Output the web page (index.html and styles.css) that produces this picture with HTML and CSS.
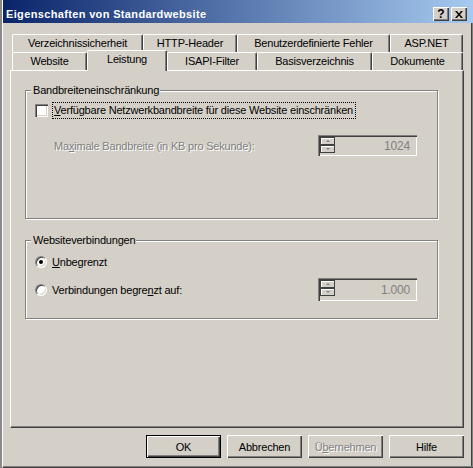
FILE: index.html
```html
<!DOCTYPE html>
<html>
<head>
    <title>Eigenschaften von Standardwebsite</title>
    <link rel="stylesheet" href="styles.css">
</head>
<body>
    <div class="window">
        <div class="titlebar">
            <span class="title">Eigenschaften von Standardwebsite</span>
            <div class="caption-btns">
                <span class="cbtn help">?</span>
                <span class="cbtn close">
                    <svg width="8" height="7" viewBox="0 0 8 7"><path d="M0 0h2l2 2.5L6 0h2L5 3.5 8 7H6L4 4.5 2 7H0l3-3.5z" fill="#000"/></svg>
                </span>
            </div>
        </div>
        <div class="dialog">
            <div class="tabs">
                <div class="tabrow back">
                    <div class="tab">Verzeichnissicherheit</div>
                    <div class="tab">HTTP-Header</div>
                    <div class="tab">Benutzerdefinierte Fehler</div>
                    <div class="tab">ASP.NET</div>
                </div>
                <div class="tabrow front">
                    <div class="tab">Website</div>
                    <div class="tab active">Leistung</div>
                    <div class="tab">ISAPI-Filter</div>
                    <div class="tab">Basisverzeichnis</div>
                    <div class="tab">Dokumente</div>
                </div>
            </div>
            <div class="panel">
                <fieldset class="group bandwidth">
                    <legend>Bandbreiteneinschränkung</legend>
                    <div class="row check-row">
                        <span class="checkbox"></span>
                        <span class="label focus"><u>V</u>erfügbare Netzwerkbandbreite für diese Website einschränken</span>
                    </div>
                    <div class="row field-row">
                        <span class="label disabled">Ma<u>x</u>imale Bandbreite (in KB pro Sekunde):</span>
                        <div class="spin">
                            <div class="spin-btns">
                                <span class="sbtn"><i class="arrow up"></i></span>
                                <span class="sbtn"><i class="arrow down"></i></span>
                            </div>
                            <span class="spin-val">1024</span>
                        </div>
                    </div>
                </fieldset>
                <fieldset class="group connections">
                    <legend>Websiteverbindungen</legend>
                    <div class="row radio-row first">
                        <span class="radio checked"></span>
                        <span class="label"><u>U</u>nbegrenzt</span>
                    </div>
                    <div class="row radio-row second">
                        <span class="radio"></span>
                        <span class="label">Verbindungen begre<u>n</u>zt auf:</span>
                        <div class="spin tall">
                            <div class="spin-btns">
                                <span class="sbtn"><i class="arrow up"></i></span>
                                <span class="sbtn"><i class="arrow down"></i></span>
                            </div>
                            <span class="spin-val">1.000</span>
                        </div>
                    </div>
                </fieldset>
            </div>
            <div class="buttons">
                <button class="btn default">OK</button>
                <button class="btn">Abbrechen</button>
                <button class="btn off">Ü<u>b</u>ernehmen</button>
                <button class="btn">Hilfe</button>
            </div>
        </div>
    </div>
</body>
</html>
```

FILE: styles.css
```css
body {
    margin: 0;
    background: #8a8a8a;
    font-family: "Liberation Sans", Arial, sans-serif;
    font-size: 11px;
    color: #000;
}
.window {
    margin-left: 2px;
    height: 467px;
    background: #d4d0c8;
    border-left: 1px solid #fff;
    border-bottom: 1px solid #404040;
    box-shadow: inset 0 -1px 0 #808080, inset -1px 0 0 #808080, inset -2px 0 0 #404040;
    overflow: hidden;
}
.titlebar {
    height: 23px;
    display: flex;
    justify-content: space-between;
    background: linear-gradient(to right, #0a246a, #a6caf0);
    padding-left: 3px;
    padding-right: 6px;
}
.title {
    color: #fff;
    font-weight: bold;
    letter-spacing: 0.35px;
    padding-top: 8px;
    line-height: 13px;
}
.caption-btns {
    display: flex;
    gap: 2px;
    margin-top: 7px;
}
.cbtn {
    width: 16px;
    height: 14px;
    box-sizing: border-box;
    background: #d4d0c8;
    box-shadow: inset 1px 1px 0 #fff, inset -1px -1px 0 #404040, inset -2px -2px 0 #808080;
    display: flex;
    align-items: center;
    justify-content: center;
    font-weight: bold;
    font-size: 12px;
    line-height: 14px;
}
.dialog {
    padding: 11px 0 0 7px;
}
.tabs {
    padding-left: 2px;
}
.tabrow {
    display: flex;
    height: 18px;
}
.tab {
    height: 18px;
    box-sizing: border-box;
    border-left: 1px solid #fff;
    border-top: 1px solid #fff;
    border-right: 1px solid #404040;
    border-radius: 2px 2px 0 0;
    box-shadow: inset -1px 0 0 #808080;
    text-align: center;
    line-height: 16px;
    letter-spacing: -0.2px;
    background: #d4d0c8;
}
.back .tab:nth-child(1) { width: 131px; }
.back .tab:nth-child(2) { width: 94px; }
.back .tab:nth-child(3) { width: 153px; }
.back .tab:nth-child(4) { width: 73px; }
.front .tab:nth-child(1) { width: 75px; }
.front .tab:nth-child(2) { width: 80px; }
.front .tab:nth-child(3) { width: 90px; }
.front .tab:nth-child(4) { width: 115px; }
.front .tab:nth-child(5) { width: 91px; }
.tab.active {
    height: 21px;
    margin-top: -2px;
    line-height: 16px;
    position: relative;
    z-index: 1;
}
.panel {
    width: 454px;
    height: 358px;
    box-sizing: border-box;
    border-left: 1px solid #fff;
    border-top: 1px solid #fff;
    border-right: 1px solid #404040;
    border-bottom: 1px solid #404040;
    box-shadow: inset -1px -1px 0 #808080;
    padding: 0 0 0 14px;
}
.group {
    width: 413px;
    box-sizing: border-box;
    margin: 0;
    padding: 0;
    border: 1px solid #808080;
    box-shadow: inset 1px 1px 0 #fff, 1px 1px 0 #fff;
}
.group legend {
    margin-left: 5px;
    padding: 0 1px 0 2px;
    background: #d4d0c8;
    line-height: 13px;
    letter-spacing: -0.2px;
}
.bandwidth {
    margin-top: 13px;
    height: 135px;
}
.connections {
    margin-top: 15px;
    height: 85px;
}
.row {
    display: flex;
    align-items: center;
    letter-spacing: -0.2px;
}
.check-row {
    margin: 5px 0 0 9px;
}
.checkbox {
    width: 13px;
    height: 13px;
    box-sizing: border-box;
    background: #fff;
    box-shadow: inset 1px 1px 0 #808080, inset 2px 2px 0 #404040, inset -1px -1px 0 #fff, inset -2px -2px 0 #d4d0c8;
    margin-right: 4px;
}
.focus {
    border: 1px dotted #000;
    padding: 1px 2px 1px 1px;
    line-height: 13px;
}
.field-row {
    margin: 16px 20px 0 28px;
    justify-content: space-between;
}
.disabled,
.btn.off {
    color: #808080;
    text-shadow: 1px 1px 0 #fff;
}
.spin {
    width: 99px;
    height: 21px;
    box-sizing: border-box;
    box-shadow: inset 1px 1px 0 #808080, inset 2px 2px 0 #404040, inset -1px -1px 0 #fff, inset -2px -2px 0 #d4d0c8;
    display: flex;
    align-items: center;
    justify-content: space-between;
    padding: 2px 7px 1px 2px;
}
.spin.tall {
    height: 23px;
    margin-left: auto;
    margin-right: 20px;
}
.spin-btns {
    display: flex;
    flex-direction: column;
    align-self: flex-start;
}
.sbtn {
    width: 15px;
    height: 8px;
    box-sizing: border-box;
    background: #d4d0c8;
    border: 1px solid #404040;
    box-shadow: inset 1px 1px 0 #fff;
    display: flex;
    align-items: center;
    justify-content: center;
}
.arrow {
    width: 0;
    height: 0;
    border-left: 2px solid transparent;
    border-right: 2px solid transparent;
}
.arrow.up { border-bottom: 2px solid #808080; }
.arrow.down { border-top: 2px solid #808080; }
.spin-val {
    color: #808080;
    font-size: 12px;
}
.radio-row {
    margin-left: 9px;
}
.radio-row.first {
    margin-top: 9px;
}
.radio-row.second {
    margin-top: 10px;
}
.radio {
    width: 12px;
    height: 12px;
    box-sizing: border-box;
    border-radius: 50%;
    background: #fff;
    border: 1px solid;
    border-color: #808080 #fff #fff #808080;
    box-shadow: inset 1px 1px 0 #404040, inset -1px -1px 0 #d4d0c8;
    margin-right: 5px;
    display: flex;
    align-items: center;
    justify-content: center;
}
.radio.checked::after {
    content: "";
    width: 4px;
    height: 4px;
    border-radius: 50%;
    background: #000;
}
.buttons {
    display: flex;
    justify-content: flex-end;
    gap: 6px;
    padding: 7px 9px 0 0;
}
.btn {
    width: 75px;
    height: 23px;
    background: #d4d0c8;
    font-family: inherit;
    font-size: 11px;
    letter-spacing: -0.2px;
    border: none;
    box-shadow: inset 1px 1px 0 #fff, inset -1px -1px 0 #404040, inset -2px -2px 0 #808080;
    padding: 0;
    color: #000;
}
.btn.default {
    border: 1px solid #000;
}
```
